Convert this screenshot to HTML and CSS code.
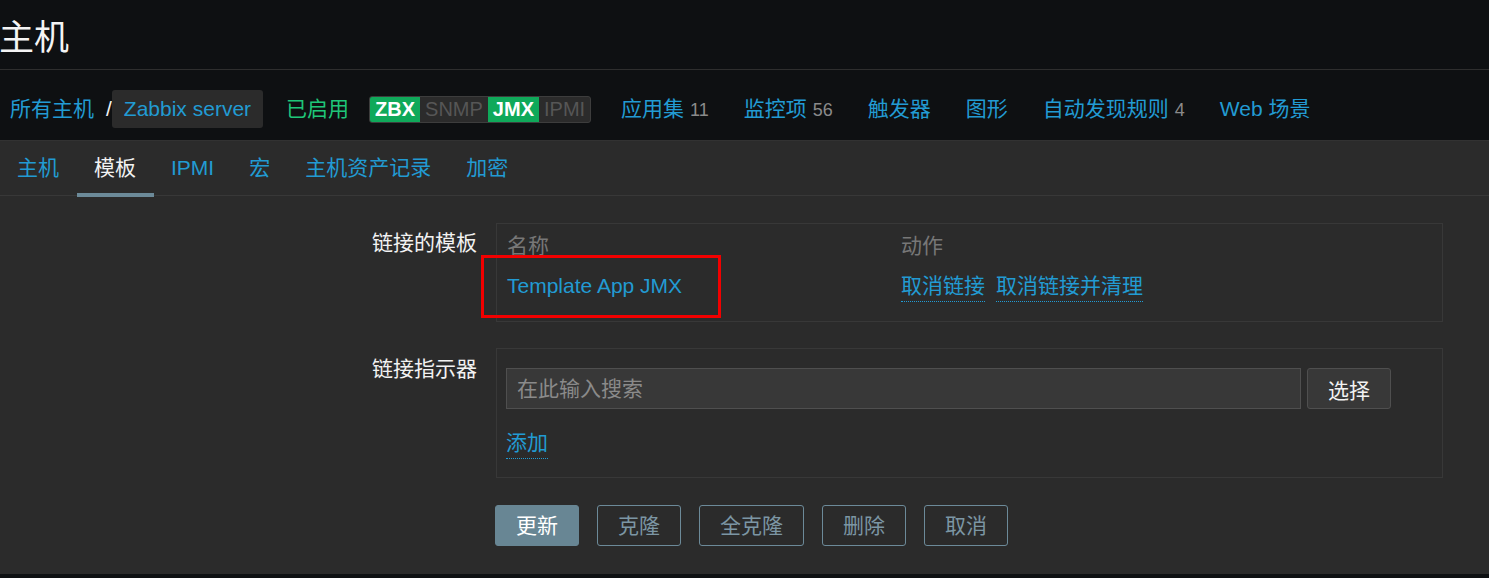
FILE: index.html
```html
<!DOCTYPE html>
<html lang="zh-CN">
<head>
<meta charset="utf-8">
<title>主机</title>
<link rel="stylesheet" href="styles.css">
</head>
<body>
<div class="page">
  <header class="top">
    <h1 class="title">主机</h1>
  </header>
  <nav class="crumbs">
    <a class="link">所有主机</a><span class="sep">/</span><span class="crumb-box">Zabbix server</span>
    <span class="enabled">已启用</span>
    <span class="status"><span class="st on">ZBX</span><span class="st">SNMP</span><span class="st on">JMX</span><span class="st">IPMI</span></span>
    <a class="nav-item first">应用集<span class="count">11</span></a>
    <a class="nav-item">监控项<span class="count">56</span></a>
    <a class="nav-item">触发器</a>
    <a class="nav-item">图形</a>
    <a class="nav-item">自动发现规则<span class="count">4</span></a>
    <a class="nav-item">Web 场景</a>
  </nav>
  <main class="content">
    <ul class="tabs">
      <li class="tab"><a>主机</a></li>
      <li class="tab active"><a>模板</a></li>
      <li class="tab"><a>IPMI</a></li>
      <li class="tab"><a>宏</a></li>
      <li class="tab"><a>主机资产记录</a></li>
      <li class="tab"><a>加密</a></li>
    </ul>
    <form class="form">
      <div class="label">链接的模板</div>
      <div class="box box-linked">
        <div class="tbl">
          <div class="th">名称</div>
          <div class="th">动作</div>
          <div class="td"><a class="link">Template App JMX</a></div>
          <div class="td"><a class="link dotted">取消链接</a><a class="link dotted second">取消链接并清理</a></div>
        </div>
        <div class="highlight"></div>
      </div>

      <div class="label label-2">链接指示器</div>
      <div class="box box-search">
        <div class="search-row">
          <input class="search" type="text" placeholder="在此输入搜索">
          <button type="button" class="btn-select">选择</button>
        </div>
        <a class="link dotted add">添加</a>
      </div>

      <div class="actions">
        <button type="button" class="btn primary">更新</button>
        <button type="button" class="btn">克隆</button>
        <button type="button" class="btn">全克隆</button>
        <button type="button" class="btn">删除</button>
        <button type="button" class="btn">取消</button>
      </div>
    </form>
  </main>
</div>
</body>
</html>
```

FILE: styles.css
```css
* {
  box-sizing: border-box;
}

html, body {
  margin: 0;
  padding: 0;
}

body {
  background: #0e1012;
  color: #f2f2f2;
  font-family: "Liberation Sans", "Noto Sans CJK SC", sans-serif;
  font-size: 21px;
  width: 1489px;
  height: 578px;
  overflow: hidden;
}

a {
  text-decoration: none;
  cursor: pointer;
}

.link {
  color: #229bd3;
}

/* header */
.top {
  height: 70px;
  border-bottom: 1px solid #2e2e2e;
  display: flex;
  align-items: center;
}

.title {
  margin: 0;
  font-size: 35px;
  font-weight: normal;
  line-height: 44px;
  padding-top: 6px;
  margin-left: -1px;
  color: #f4f4f4;
}

/* breadcrumbs / nav */
.crumbs {
  height: 70px;
  display: flex;
  align-items: center;
  padding: 8px 0 0 10px;
  line-height: 30px;
  white-space: nowrap;
}

.sep {
  color: #f2f2f2;
  margin-left: 12px;
}

.crumb-box {
  background: #2b2b2b;
  color: #229bd3;
  height: 38px;
  line-height: 38px;
  padding: 0 12px;
  border-radius: 3px;
}

.enabled {
  color: #1fc679;
  margin-left: 23px;
}

.status {
  display: flex;
  margin-left: 20px;
  border: 1px solid #3d3d3d;
  border-radius: 3px;
  overflow: hidden;
  background: #2b2b2b;
  font-size: 20px;
  line-height: 25px;
}

.st {
  padding: 0 5px;
  color: #565656;
}

.st.on {
  background: #0fa95a;
  color: #ffffff;
  font-weight: bold;
}

.nav-item {
  color: #229bd3;
  margin-left: 35px;
}

.nav-item.first {
  margin-left: 30px;
}

.count {
  color: #8a8a8a;
  font-size: 18px;
  margin-left: 6px;
}

/* content */
.content {
  background: #2b2b2b;
}

.tabs {
  list-style: none;
  margin: 0;
  padding: 0;
  display: flex;
  height: 56px;
  border-top: 1px solid #323232;
  border-bottom: 1px solid #383838;
}

.tab {
  margin-bottom: -1px;
}

.tab a {
  display: block;
  height: 56px;
  padding: 5px 17.5px 0;
  line-height: 44px;
  color: #229bd3;
  border-bottom: 4px solid transparent;
}

.tab:first-child a {
  margin-left: -0.5px;
}

.tab.active a {
  color: #f2f2f2;
  border-bottom-color: #6c8a99;
}

/* form */
.form {
  display: grid;
  grid-template-columns: 477px 947px;
  column-gap: 19px;
  row-gap: 26px;
  padding: 27px 0 28px;
  align-items: start;
}

.label {
  text-align: right;
  line-height: 30px;
  padding-top: 5px;
  color: #f2f2f2;
}

.label-2 {
  padding-top: 6px;
}

.box {
  border: 1px solid #383838;
}

.box-linked {
  position: relative;
  height: 99px;
  padding: 7px 10px 0;
}

.tbl {
  display: grid;
  grid-template-columns: 394px auto;
  row-gap: 10px;
  line-height: 30px;
}

.th {
  color: #777777;
}

.td {
  display: flex;
  align-items: flex-start;
}

.dotted {
  display: inline-block;
  line-height: 30px;
  border-bottom: 1px dotted #229bd3;
}

.second {
  margin-left: 11px;
}

.highlight {
  position: absolute;
  left: -16px;
  top: 31px;
  width: 240px;
  height: 63px;
  border: 3px solid #f20000;
}

.box-search {
  height: 130px;
  padding: 19px 9px 0;
}

.search-row {
  display: flex;
}

.search {
  width: 795px;
  height: 41px;
  background: #383838;
  border: 1px solid #4f4f4f;
  border-radius: 0;
  padding: 0 10px;
  font-family: inherit;
  font-size: 21px;
  color: #f2f2f2;
  outline: none;
}

.search::placeholder {
  color: #8a8a8a;
}

.btn-select {
  margin-left: 6px;
  width: 84px;
  height: 41px;
  background: #383838;
  border: 1px solid #4f4f4f;
  border-radius: 3px;
  color: #f2f2f2;
  font-family: inherit;
  font-size: 21px;
  padding: 0;
}

.add {
  margin-top: 19px;
}

.actions {
  grid-column: 2;
  display: flex;
  gap: 18px;
  margin-top: 1px;
  margin-left: -1px;
}

.btn {
  height: 41px;
  padding: 0 20px;
  background: transparent;
  border: 1px solid #6c8a99;
  border-radius: 3px;
  color: #7c96a4;
  font-family: inherit;
  font-size: 21px;
  line-height: 39px;
}

.btn.primary {
  background: #688694;
  border-color: #688694;
  color: #ffffff;
}
```
